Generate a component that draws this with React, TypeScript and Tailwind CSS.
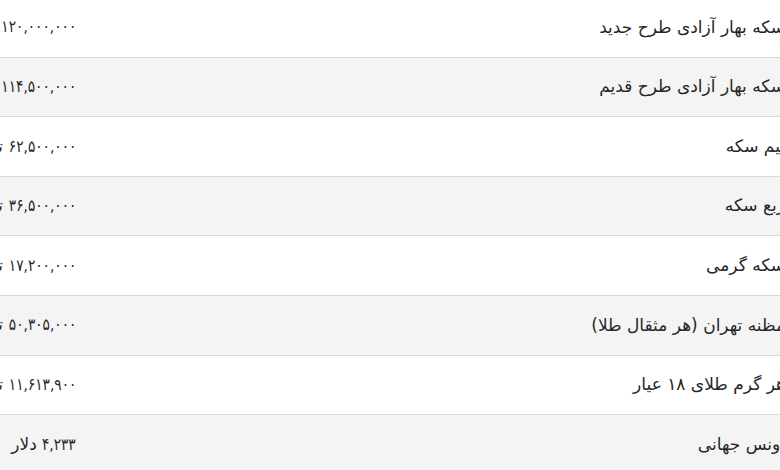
import React, { useLayoutEffect, useRef, useState } from "react";

const rows: [string, string, string][] = [
  ["سکه بهار آزادی طرح جدید", "۱۲۰,۰۰۰,۰۰۰", "تومان"],
  ["سکه بهار آزادی طرح قدیم", "۱۱۴,۵۰۰,۰۰۰", "تومان"],
  ["نیم سکه", "۶۲,۵۰۰,۰۰۰", "تومان"],
  ["ربع سکه", "۳۶,۵۰۰,۰۰۰", "تومان"],
  ["سکه گرمی", "۱۷,۲۰۰,۰۰۰", "تومان"],
  ["مظنه تهران (هر مثقال طلا)", "۵۰,۳۰۵,۰۰۰", "تومان"],
  ["هر گرم طلای ۱۸ عیار", "۱۱,۶۱۳,۹۰۰", "تومان"],
  ["اونس جهانی", "۴,۲۳۳", "دلار"],
];

const SCALE = 0.83;

function Num({ value }: { value: string }) {
  const ref = useRef<HTMLSpanElement>(null);
  const [w, setW] = useState<number | null>(null);
  useLayoutEffect(() => {
    if (ref.current) setW(ref.current.getBoundingClientRect().width / SCALE);
  }, [value]);
  return (
    <span
      className="inline-block whitespace-nowrap"
      style={w ? { width: w * SCALE } : undefined}
    >
      <span
        ref={ref}
        dir="ltr"
        className="inline-block text-[16.5px] scale-x-[0.83] origin-right"
      >
        {value}
      </span>
    </span>
  );
}

export default function App() {
  return (
    <div className="w-[780px] h-[470px] overflow-hidden bg-white">
      <div
        dir="rtl"
        className="w-[840px] -ml-[40px] -mt-[2px] text-[17px] text-[#262626]"
        style={{ fontFamily: "'DejaVu Sans', sans-serif" }}
      >
        {rows.map(([label, num, unit], i) => (
          <div
            key={i}
            className={`flex h-[59.6px] items-center border-b border-[#d9d9d9] ${
              i % 2 === 1 ? "bg-[#f4f4f4]" : "bg-white"
            }`}
          >
            <div className="w-[710px] shrink-0 pr-[15px] whitespace-nowrap">{label}</div>
            <div className="flex-1 pr-[14px] whitespace-nowrap">
              <Num value={num} /> <span>{unit}</span>
            </div>
          </div>
        ))}
      </div>
    </div>
  );
}
